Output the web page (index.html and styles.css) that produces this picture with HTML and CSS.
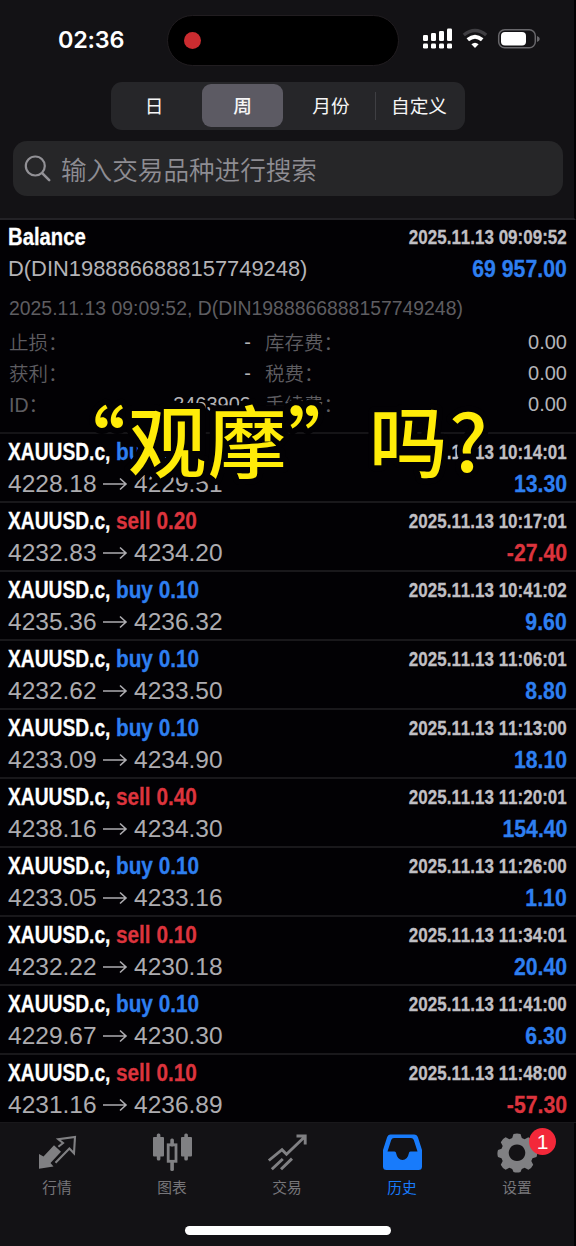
FILE: index.html
```
<!DOCTYPE html>
<html lang="zh-CN">
<head>
<meta charset="utf-8">
<title>历史</title>
<link rel="stylesheet" href="styles.css">
</head>
<body>
<div class="app">
  <header class="top">
    <div class="status">
      <span class="clock">02:36</span>
      <div class="island"><i class="rec"></i></div>
      <svg class="sysicons" width="120" height="24" viewBox="0 0 120 24">
        <g fill="#fff">
          <rect x="3" y="8" width="5" height="6" rx="1.2"/><rect x="11" y="6" width="5" height="8" rx="1.2"/><rect x="19" y="4" width="5" height="10" rx="1.2"/><rect x="27" y="1.5" width="5" height="12.5" rx="1.2"/>
          <rect x="3" y="16.5" width="5" height="5" rx="1.2"/><rect x="11" y="16.5" width="5" height="5" rx="1.2"/><rect x="19" y="16.5" width="5" height="5" rx="1.2"/><rect x="27" y="16.5" width="5" height="5" rx="1.2"/>
          <path d="M51.4 17.3Q55 14.2 58.6 17.3L55 21Z"/>
        </g>
        <path d="M43.8 8Q55 -1.2 66.2 8" fill="none" stroke="#3f3e42" stroke-width="3.4"/>
        <path d="M47.8 12.8Q55 6.6 62.2 12.8" fill="none" stroke="#fff" stroke-width="3.8"/>
        <rect x="78.7" y="2.7" width="36.6" height="18" rx="6" fill="none" stroke="#68676b" stroke-width="1.5"/>
        <rect x="81" y="5" width="25" height="13.5" rx="4" fill="#fff"/>
        <path d="M117 9v6q2.8-1 2.8-3t-2.8-3" fill="#68676b"/>
      </svg>
    </div>
    <nav class="segments">
      <span class="day">日</span><span class="on">周</span><span class="month">月份</span><i class="sep"></i><span class="custom">自定义</span>
    </nav>
    <div class="search">
      <svg width="28" height="28" viewBox="0 0 28 28" fill="none" stroke="#929196" stroke-width="2.2" stroke-linecap="round"><circle cx="11.3" cy="11" r="9.5"/><path d="M18.2 18.2l7 7" stroke-width="2.6"/></svg>
      <span>输入交易品种进行搜索</span>
    </div>
  </header>

  <main class="list">
    <section class="balance">
      <div class="line"><b class="name title">Balance</b><b class="date">2025.11.13 09:09:52</b></div>
      <div class="line"><span class="account">D(DIN1988866888157749248)</span><b class="sum blue">69 957.00</b></div>
      <p class="comment">2025.11.13 09:09:52, D(DIN1988866888157749248)</p>
      <div class="details">
        <span>止损：</span><em>-</em><span>库存费：</span><em>0.00</em>
        <span>获利：</span><em>-</em><span>税费：</span><em>0.00</em>
        <span>ID：</span><em>3463902</em><span>手续费：</span><em>0.00</em>
      </div>
    </section>

    <article class="deal"><div class="line"><b class="name">XAUUSD.c,</b><b class="side blue">buy 0.10</b><b class="date">2025.11.13 10:14:01</b></div><div class="line"><span class="price">4228.18</span><svg class="arrow" viewBox="0 0 26 14"><path d="M1 7h23M18 1.5L24 7L18 12.5"/></svg><span class="price">4229.51</span><b class="sum blue">13.30</b></div></article>
    <article class="deal"><div class="line"><b class="name">XAUUSD.c,</b><b class="side red">sell 0.20</b><b class="date">2025.11.13 10:17:01</b></div><div class="line"><span class="price">4232.83</span><svg class="arrow" viewBox="0 0 26 14"><path d="M1 7h23M18 1.5L24 7L18 12.5"/></svg><span class="price">4234.20</span><b class="sum red">-27.40</b></div></article>
    <article class="deal"><div class="line"><b class="name">XAUUSD.c,</b><b class="side blue">buy 0.10</b><b class="date">2025.11.13 10:41:02</b></div><div class="line"><span class="price">4235.36</span><svg class="arrow" viewBox="0 0 26 14"><path d="M1 7h23M18 1.5L24 7L18 12.5"/></svg><span class="price">4236.32</span><b class="sum blue">9.60</b></div></article>
    <article class="deal"><div class="line"><b class="name">XAUUSD.c,</b><b class="side blue">buy 0.10</b><b class="date">2025.11.13 11:06:01</b></div><div class="line"><span class="price">4232.62</span><svg class="arrow" viewBox="0 0 26 14"><path d="M1 7h23M18 1.5L24 7L18 12.5"/></svg><span class="price">4233.50</span><b class="sum blue">8.80</b></div></article>
    <article class="deal"><div class="line"><b class="name">XAUUSD.c,</b><b class="side blue">buy 0.10</b><b class="date">2025.11.13 11:13:00</b></div><div class="line"><span class="price">4233.09</span><svg class="arrow" viewBox="0 0 26 14"><path d="M1 7h23M18 1.5L24 7L18 12.5"/></svg><span class="price">4234.90</span><b class="sum blue">18.10</b></div></article>
    <article class="deal"><div class="line"><b class="name">XAUUSD.c,</b><b class="side red">sell 0.40</b><b class="date">2025.11.13 11:20:01</b></div><div class="line"><span class="price">4238.16</span><svg class="arrow" viewBox="0 0 26 14"><path d="M1 7h23M18 1.5L24 7L18 12.5"/></svg><span class="price">4234.30</span><b class="sum blue">154.40</b></div></article>
    <article class="deal"><div class="line"><b class="name">XAUUSD.c,</b><b class="side blue">buy 0.10</b><b class="date">2025.11.13 11:26:00</b></div><div class="line"><span class="price">4233.05</span><svg class="arrow" viewBox="0 0 26 14"><path d="M1 7h23M18 1.5L24 7L18 12.5"/></svg><span class="price">4233.16</span><b class="sum blue">1.10</b></div></article>
    <article class="deal"><div class="line"><b class="name">XAUUSD.c,</b><b class="side red">sell 0.10</b><b class="date">2025.11.13 11:34:01</b></div><div class="line"><span class="price">4232.22</span><svg class="arrow" viewBox="0 0 26 14"><path d="M1 7h23M18 1.5L24 7L18 12.5"/></svg><span class="price">4230.18</span><b class="sum blue">20.40</b></div></article>
    <article class="deal"><div class="line"><b class="name">XAUUSD.c,</b><b class="side blue">buy 0.10</b><b class="date">2025.11.13 11:41:00</b></div><div class="line"><span class="price">4229.67</span><svg class="arrow" viewBox="0 0 26 14"><path d="M1 7h23M18 1.5L24 7L18 12.5"/></svg><span class="price">4230.30</span><b class="sum blue">6.30</b></div></article>
    <article class="deal"><div class="line"><b class="name">XAUUSD.c,</b><b class="side red">sell 0.10</b><b class="date">2025.11.13 11:48:00</b></div><div class="line"><span class="price">4231.16</span><svg class="arrow" viewBox="0 0 26 14"><path d="M1 7h23M18 1.5L24 7L18 12.5"/></svg><span class="price">4236.89</span><b class="sum red">-57.30</b></div></article>
  </main>

  <footer class="tabs">
    <div class="tab">
      <svg width="44" height="44" viewBox="0 0 44 44"><path d="M4 22L8.5 24.5L19 13.2L26 19.8L15.5 31L18.5 34.5L4 36.7Z" fill="#808083"/><path d="M23.4 14.7L28 11L23.3 7.2L40 4.9L39 21.3L34.4 16.5L20.5 30.7" fill="none" stroke="#808083" stroke-width="2.1"/></svg>
      <span>行情</span>
    </div>
    <div class="tab">
      <svg width="44" height="44" viewBox="0 0 44 44"><g fill="#808083"><rect x="3" y="5" width="11" height="19.5" rx="1"/><rect x="6.8" y="1.5" width="3.6" height="27" rx="1.5"/><rect x="31" y="5" width="11" height="19.5" rx="1"/><rect x="34.3" y="1.5" width="3.6" height="27" rx="1.5"/><rect x="20.3" y="6.5" width="3.6" height="8" rx="1.5"/><rect x="20.3" y="29" width="3.6" height="10" rx="1.5"/></g><rect x="18.2" y="12.8" width="7.8" height="16.5" fill="none" stroke="#808083" stroke-width="2.8"/></svg>
      <span>图表</span>
    </div>
    <div class="tab">
      <svg width="44" height="44" viewBox="0 0 44 44" fill="none" stroke="#808083" stroke-width="2.9"><path d="M3.8 28.5L17 17.7L21.5 22.3L39.5 5M31.5 4h8.7v8.5"/><path d="M6.8 37.3L17.8 27M16 37.3L27 26.6"/></svg>
      <span>交易</span>
    </div>
    <div class="tab active">
      <svg width="44" height="44" viewBox="0 0 44 44"><path fill="#187bfb" fill-rule="evenodd" d="M10.5 2.5H34Q37 2.5 38 5.5L42 18V34.5Q42 38 38.5 38H6.5Q3 38 3 34.5V18L7 5.5Q8 2.5 10.5 2.5ZM14 6Q12 6 11.2 8L7.5 19.5H14.5Q16 19.5 16.2 21.5Q17.5 28 22.5 28T28.8 21.5Q29 19.5 30.5 19.5H37.5L33.8 8Q33 6 31 6Z"/></svg>
      <span>历史</span>
    </div>
    <div class="tab">
      <svg width="44" height="44" viewBox="0 0 44 44"><path fill="#808083" fill-rule="evenodd" d="M18.5 2Q22 .8 25.5 2L26.8 6L29.6 7.2L33.4 5.3Q36.8 6.9 38.2 10.2L36.3 14L37.5 16.8L41.5 18Q42.8 21.5 41.5 25L37.5 26.2L36.3 29L38.2 32.8Q36.8 36.1 33.4 37.7L29.6 35.8L26.8 37L25.5 40Q22 41.2 18.5 40L17.2 37L14.4 35.8L10.6 37.7Q7.2 36.1 5.8 32.8L7.7 29L6.5 26.2L3 25Q1.8 21.5 3 18L6.5 16.8L7.7 14L5.8 10.2Q7.2 6.9 10.6 5.3L14.4 7.2L17.2 6ZM22 12.5a8.3 8.3 0 1 0 .01 0"/></svg>
      <i class="badge">1</i>
      <span>设置</span>
    </div>
    <i class="home"></i>
  </footer>

  <svg class="caption" width="420" height="110" viewBox="0 0 420 110">
    <text class="cap-text"><tspan x="-33 48 128 208 289 369" y="74">“观摩”吗?</tspan></text>
  </svg>
</div>
</body>
</html>
```
FILE: styles.css
```
* { box-sizing: border-box; }
body { margin: 0; background: #000; }
.app {
  position: relative;
  width: 576px;
  height: 1246px;
  overflow: hidden;
  display: flex;
  flex-direction: column;
  background: #020104;
  font-family: "Liberation Sans", "Noto Sans CJK SC", sans-serif;
  font-kerning: none;
}
i, em { font-style: normal; }

/* header */
.top { height: 220px; flex: none; background: #131215; border-bottom: 2px solid #232226; border-right: 2px solid #030204; }
.status { height: 82px; padding-top: 14px; display: flex; align-items: center; padding-bottom: 16px; }
.clock { width: 109px; margin-left: 58px; font: 600 23.4px/52px Inter, sans-serif; color: #fff; letter-spacing: -.2px; }
.island { width: 232px; height: 51px; border-radius: 26px; background: #000; border: 1px solid #211d20; display: flex; align-items: center; padding-left: 16px; }
.rec { width: 17px; height: 17px; border-radius: 50%; background: #cb2c30; }
.sysicons { margin-left: 21px; flex: none; margin-top: -2px; }
.segments { width: 354px; height: 48px; margin-left: 111px; padding: 0 3px 1px; border-radius: 11px; background: #262629; display: flex; align-items: center; color: #f5f5f6; font: 18.7px/41px "Noto Sans CJK SC", sans-serif; text-align: center; }
.segments span { height: 43px; flex: none; }
.segments .day { width: 80px; margin-right: 8px; }
.segments .on { width: 81px; border-radius: 9px; background: #5c5a63; font-weight: 500; }
.segments .month { width: 92px; padding-left: 4px; }
.sep { width: 1px; height: 28px; flex: none; background: #3f3f43; }
.segments .custom { width: 86px; }
.search { height: 55px; margin: 11px 11px 0 13px; padding-left: 11px; border-radius: 14px; background: #262628; display: flex; align-items: center; gap: 9px; color: #8e8d93; font: 25.6px/54px "Noto Sans CJK SC", sans-serif; font-weight: 350; }

/* list */
.list { height: 903px; flex: none; }
.line { display: flex; height: 32px; line-height: 32px; align-items: center; white-space: nowrap; }
.line b { -webkit-text-stroke: .3px currentColor; }
.name { width: 108px; flex: none; font-size: 24px; color: #fff; transform: scaleX(.8); transform-origin: left; }
.name.title { transform: scaleX(.845); }
.side { width: 90px; font-size: 24px; transform: scaleX(.865); transform-origin: left; }
.date { margin-left: auto; font-size: 20px; color: #c0bfc3; transform: scaleX(.85); transform-origin: right; }
.sum { margin-left: auto; font-size: 24px; transform: scaleX(.885); transform-origin: right; }
.blue { color: #2e7ff0; }
.red { color: #dc343d; }
.balance { height: 214px; padding: 1px 9px 0 8px; border-bottom: 2px solid #151417; }
.account { font-size: 21.9px; color: #b4b3b7; }
.comment { margin: 8px 0 0 1px; font-size: 19.4px; line-height: 30px; color: #5e5d61; }
.details { display: grid; grid-template-columns: 90px 152px 110px 1fr; padding: 4px 0 0 1px; grid-auto-rows: 31px; line-height: 32px; font-size: 19.5px; color: #5e5d61; font-weight: 350; }
.details span:nth-child(4n + 3) { padding-left: 14px; white-space: nowrap; }
.details em { text-align: right; color: #b4b3b7; font-size: 20px; line-height: 31px; font-weight: 400; }
.deal { height: 69px; padding: 2px 9px 0 8px; border-bottom: 2px solid #19181b; }
.price { font-size: 24.5px; color: #adacb0; width: 89px; }
.arrow { width: 26px; height: 14px; margin: 0 6px 0 5px; fill: none; stroke: #adacb0; stroke-width: 1.6; }

/* bottom bar */
.tabs { position: relative; flex: 1; padding-top: 9px; display: flex; background: #131215; border-right: 2px solid #030204; }
.tab { width: 115px; height: 66px; flex: none; position: relative; display: flex; flex-direction: column; align-items: center; color: #77767a; font: 14.7px/22px "Noto Sans CJK SC", sans-serif; }
.tab svg { flex: none; margin-right: 2px; }
.tab span { margin-right: 1px; }
.tab.active { color: #187bfb; }
.badge { position: absolute; left: 69px; top: -4px; width: 27px; height: 27px; border-radius: 50%; background: #f32839; color: #fff; font: 21px/27px "Liberation Sans", sans-serif; text-align: center; }
.home { position: absolute; left: 185px; top: 103px; width: 206px; height: 9px; border-radius: 5px; background: #fff; }

/* video caption over the list */
.caption { position: absolute; left: 80px; top: 398px; overflow: visible; }
.cap-text { font: 500 78.5px "Noto Sans CJK SC", sans-serif; fill: #ffec08; stroke: #020104; stroke-width: 12px; stroke-linejoin: round; paint-order: stroke; }
```
